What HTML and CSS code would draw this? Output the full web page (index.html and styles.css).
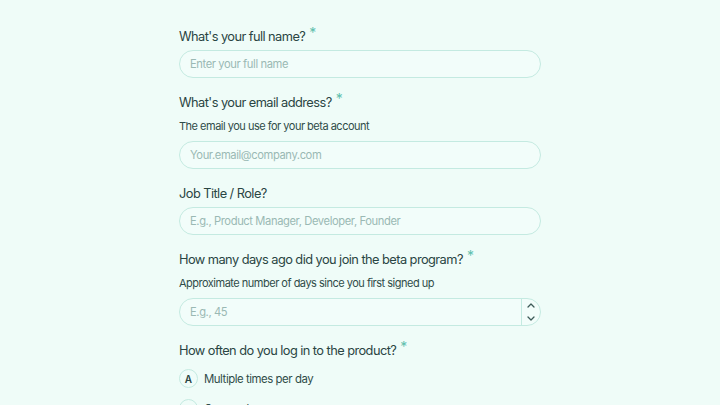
FILE: index.html
```html
<!DOCTYPE html>
<html lang="en">
<head>
  <meta charset="UTF-8" />
  <meta name="viewport" content="width=device-width, initial-scale=1.0"/>
  <title>Beta Feedback</title>
  <link rel="stylesheet" href="styles.css">
</head>
<body>
  <form class="survey">
    <div class="field">
      <label class="question" for="full-name">What's your full name?<span class="req">*</span></label>
      <input class="text-input" type="text" id="full-name" placeholder="Enter your full name">
    </div>

    <div class="field">
      <label class="question" for="email">What's your email address?<span class="req">*</span></label>
      <p class="hint">The email you use for your beta account</p>
      <input class="text-input" type="email" id="email" placeholder="Your.email@company.com">
    </div>

    <div class="field">
      <label class="question" for="role">Job Title / Role?</label>
      <input class="text-input" type="text" id="role" placeholder="E.g., Product Manager, Developer, Founder">
    </div>

    <div class="field">
      <label class="question" for="days">How many days ago did you join the beta program?<span class="req">*</span></label>
      <p class="hint">Approximate number of days since you first signed up</p>
      <div class="number-wrap">
        <input class="text-input number-input" type="text" id="days" placeholder="E.g., 45">
        <div class="spinner">
          <svg width="10" height="6" viewBox="0 0 10 6"><path d="M2 5 L5 2 L8 5" fill="none" stroke="#3d5a58" stroke-width="1.3" stroke-linecap="round" stroke-linejoin="round"/></svg>
          <svg width="10" height="6" viewBox="0 0 10 6"><path d="M2 1 L5 4 L8 1" fill="none" stroke="#3d5a58" stroke-width="1.3" stroke-linecap="round" stroke-linejoin="round"/></svg>
        </div>
      </div>
    </div>

    <div class="field">
      <span class="question options-title">How often do you log in to the product?<span class="req">*</span></span>
      <div class="options">
        <label class="option"><span class="key">A</span>Multiple times per day</label>
        <label class="option"><span class="key">B</span>Once a day</label>
      </div>
    </div>
  </form>
</body>
</html>
```

FILE: styles.css
```css
body {
  margin: 0;
  background: #effcf8;
  font-family: 'Inter', sans-serif;
  color: #2a4543;
  overflow: hidden;
  height: 405px;
}

.survey {
  width: 362px;
  margin: 0 auto;
  padding-top: 29px;
  display: flex;
  flex-direction: column;
  gap: 17px;
}

.field {
  display: flex;
  flex-direction: column;
}

.question {
  font-size: 12.8px;
  line-height: 16px;
  margin-bottom: 5px;
  letter-spacing: -0.55px;
}

.req {
  color: #5fbfae;
  font-size: 14px;
  line-height: 0;
  vertical-align: 3px;
  margin-left: 4px;
}

.hint {
  margin: 2px 0 7px;
  font-size: 11px;
  line-height: 16px;
  letter-spacing: -0.5px;
  color: #2f4c49;
}

.text-input {
  box-sizing: border-box;
  width: 100%;
  height: 28px;
  border: 1px solid #c4eae1;
  border-radius: 14px;
  background: #f2fdfa;
  padding: 0 10px;
  font-family: inherit;
  font-size: 11.2px;
  letter-spacing: -0.4px;
  color: #2a4543;
  outline: none;
}

.text-input::placeholder {
  color: #9ab9b4;
}

.number-wrap {
  display: flex;
  height: 28px;
  box-sizing: border-box;
  border: 1px solid #c4eae1;
  border-radius: 14px;
  background: #f2fdfa;
  overflow: hidden;
}

.number-input {
  flex: 1;
  border: none;
  height: 26px;
  border-radius: 0;
  background: transparent;
}

.spinner {
  width: 18px;
  border-left: 1px solid #c4eae1;
  display: flex;
  flex-direction: column;
  align-items: center;
  justify-content: center;
  gap: 8px;
}

.options-title {
  margin-bottom: 10px;
}

.options {
  display: flex;
  flex-direction: column;
  gap: 11px;
}

.option {
  display: flex;
  align-items: center;
  gap: 6px;
  font-size: 11.4px;
  letter-spacing: -0.45px;
  color: #2f4c49;
}

.key {
  box-sizing: border-box;
  width: 19px;
  height: 19px;
  border: 1px solid #c4eae1;
  border-radius: 50%;
  display: flex;
  align-items: center;
  justify-content: center;
  font-size: 10px;
  font-weight: 600;
  letter-spacing: 0;
  color: #2a4543;
}
```
